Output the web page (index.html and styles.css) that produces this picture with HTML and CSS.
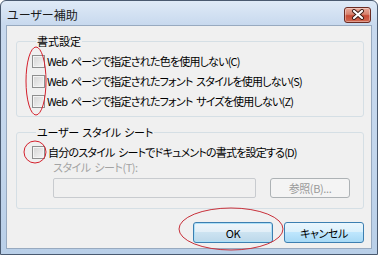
FILE: index.html
```html
<!DOCTYPE html>
<html lang="ja">
<head>
<meta charset="utf-8">
<title>ユーザー補助</title>
<link rel="stylesheet" href="styles.css">
</head>
<body>
<div class="window">
  <div class="titlebar">
    <span class="title">ユーザー補助</span>
    <span class="close">
      <svg width="14" height="11" viewBox="0 0 14 11">
        <path d="M3 2 L11 9 M11 2 L3 9" stroke="#3a1a14" stroke-width="4" stroke-linecap="round"/>
        <path d="M3 2 L11 9 M11 2 L3 9" stroke="#ffffff" stroke-width="2.2" stroke-linecap="round"/>
      </svg>
    </span>
  </div>
  <div class="client">
    <fieldset class="group g1">
      <legend>書式設定</legend>
      <div class="row"><span class="cb"></span><span class="lbl">Web ページで指定された色を使用しない(C)</span></div>
      <div class="row"><span class="cb"></span><span class="lbl">Web ページで指定されたフォント スタイルを使用しない(S)</span></div>
      <div class="row"><span class="cb"></span><span class="lbl">Web ページで指定されたフォント サイズを使用しない(Z)</span></div>
    </fieldset>
    <fieldset class="group g2">
      <legend>ユーザー スタイル シート</legend>
      <div class="row r4"><span class="cb"></span><span class="lbl">自分のスタイル シートでドキュメントの書式を設定する(D)</span></div>
      <div class="sub">
        <div class="sublabel">スタイル シート(T):</div>
        <div class="pathrow">
          <span class="input"></span>
          <span class="btn off">参照(B)...</span>
        </div>
      </div>
    </fieldset>
    <div class="buttons">
      <span class="btn def">OK</span>
      <span class="btn hot">キャンセル</span>
    </div>
  </div>
  <svg class="marks" width="378" height="255" viewBox="0 0 378 255">
    <ellipse cx="36" cy="81" rx="10" ry="34" fill="none" stroke="#d4202c" stroke-width="1"/>
    <ellipse cx="35" cy="152" rx="11" ry="11" fill="none" stroke="#d4202c" stroke-width="1"/>
    <ellipse cx="231" cy="229" rx="52" ry="21" fill="none" stroke="#c8303a" stroke-width="1"/>
  </svg>
</div>
</body>
</html>
```
FILE: styles.css
```css
html, body {
  margin: 0;
  padding: 0;
  background: #ffffff;
}
body {
  font-family: "Noto Sans CJK JP", "Noto Sans", sans-serif;
  font-size: 11px;
  color: #000;
  font-feature-settings: "palt";
}
.window {
  position: relative;
  box-sizing: border-box;
  width: 378px;
  height: 255px;
  border: 1px solid #4a5a70;
  border-radius: 6px 6px 0 0;
  background: linear-gradient(#dfeaf7 0, #c8d9ee 24px, #c3d6ec 60%, #b9cfe8 100%);
  padding: 0 5px 5px;
  display: flex;
  flex-direction: column;
}
.titlebar {
  height: 24px;
  display: flex;
  align-items: center;
  justify-content: space-between;
}
.title {
  font-size: 12px;
  margin-left: 1px;
  margin-top: 2px;
  letter-spacing: 0px;
  color: #1a1a1a;
}
.close {
  width: 27px;
  height: 16px;
  margin-top: 3px;
  margin-right: 1px;
  box-sizing: border-box;
  border: 1px solid #6b2b22;
  border-radius: 3px;
  background: linear-gradient(#e9a99a 0, #d7826e 45%, #c74a35 55%, #d06a52 100%);
  display: flex;
  align-items: center;
  justify-content: center;
  box-shadow: inset 0 0 0 1px rgba(255,255,255,0.35);
}
.client {
  flex: 1;
  background: #f0f0f0;
  border: 1px solid #98aac0;
  padding: 8px 7px 0 9px;
  display: flex;
  flex-direction: column;
}
.group {
  margin: 0;
  border: 1px solid #d5dfe5;
  border-radius: 3px;
  padding: 3px 4px 5px 15px;
  min-width: 0;
}
.group legend {
  padding: 0 1px;
  margin-left: 4px;
  line-height: 14px;
  height: 14px;
  font-size: 11px;
  letter-spacing: -0.2px;
  word-spacing: 1px;
}
.g1 legend { font-feature-settings: normal; letter-spacing: 0; }
.g2 {
  margin-top: 8px;
  padding-top: 4px;
  padding-bottom: 10px;
}
.row {
  height: 20px;
  display: flex;
  align-items: center;
  white-space: nowrap;
}
.r4 { height: 18px; }
.lbl {
  letter-spacing: -0.8px;
  word-spacing: 2px;
  margin-left: 2px;
}
.r4 .lbl { margin-left: 3px; }
.cb {
  width: 11px;
  height: 11px;
  flex: none;
  border: 1px solid #8e8f8f;
  background: linear-gradient(135deg, #d4d4d4, #f6f6f6);
  box-shadow: inset 0 0 0 1px #f4f4f4;
}
.sub {
  margin-left: 21px;
}
.sublabel {
  height: 13px;
  line-height: 13px;
  color: #a3a3a3;
  letter-spacing: -0.5px;
  word-spacing: 2px;
}
.pathrow {
  margin-top: 4px;
  display: flex;
  align-items: center;
  gap: 14px;
}
.input {
  width: 203px;
  height: 20px;
  box-sizing: border-box;
  border: 1px solid #c8cbcf;
  border-radius: 2px;
  background: #f0f0f0;
}
.btn {
  width: 80px;
  height: 21px;
  box-sizing: border-box;
  border: 1px solid #707070;
  border-radius: 3px;
  display: flex;
  align-items: center;
  justify-content: center;
  letter-spacing: -0.4px;
  background: linear-gradient(#f2f2f2 0, #ebebeb 50%, #dddddd 50%, #cfcfcf 100%);
}
.btn.off {
  height: 20px;
  border-color: #adb2b5;
  background: #f4f4f4;
  color: #9a9a9a;
}
.buttons {
  margin-top: 13px;
  display: flex;
  justify-content: flex-end;
  gap: 11px;
}
.btn.def {
  border-color: #3c7fb1;
  background: linear-gradient(#eef6fb 0, #e1eef7 50%, #cce3f1 50%, #bcd8ea 100%);
  box-shadow: inset 0 0 0 1px #aee0f7;
}
.btn.hot {
  border-color: #3c7fb1;
  background: linear-gradient(#eaf6fd 0, #d9f0fc 50%, #bee6fd 50%, #a7d9f5 100%);
}
.marks {
  position: absolute;
  left: -1px;
  top: -1px;
  pointer-events: none;
}
```
